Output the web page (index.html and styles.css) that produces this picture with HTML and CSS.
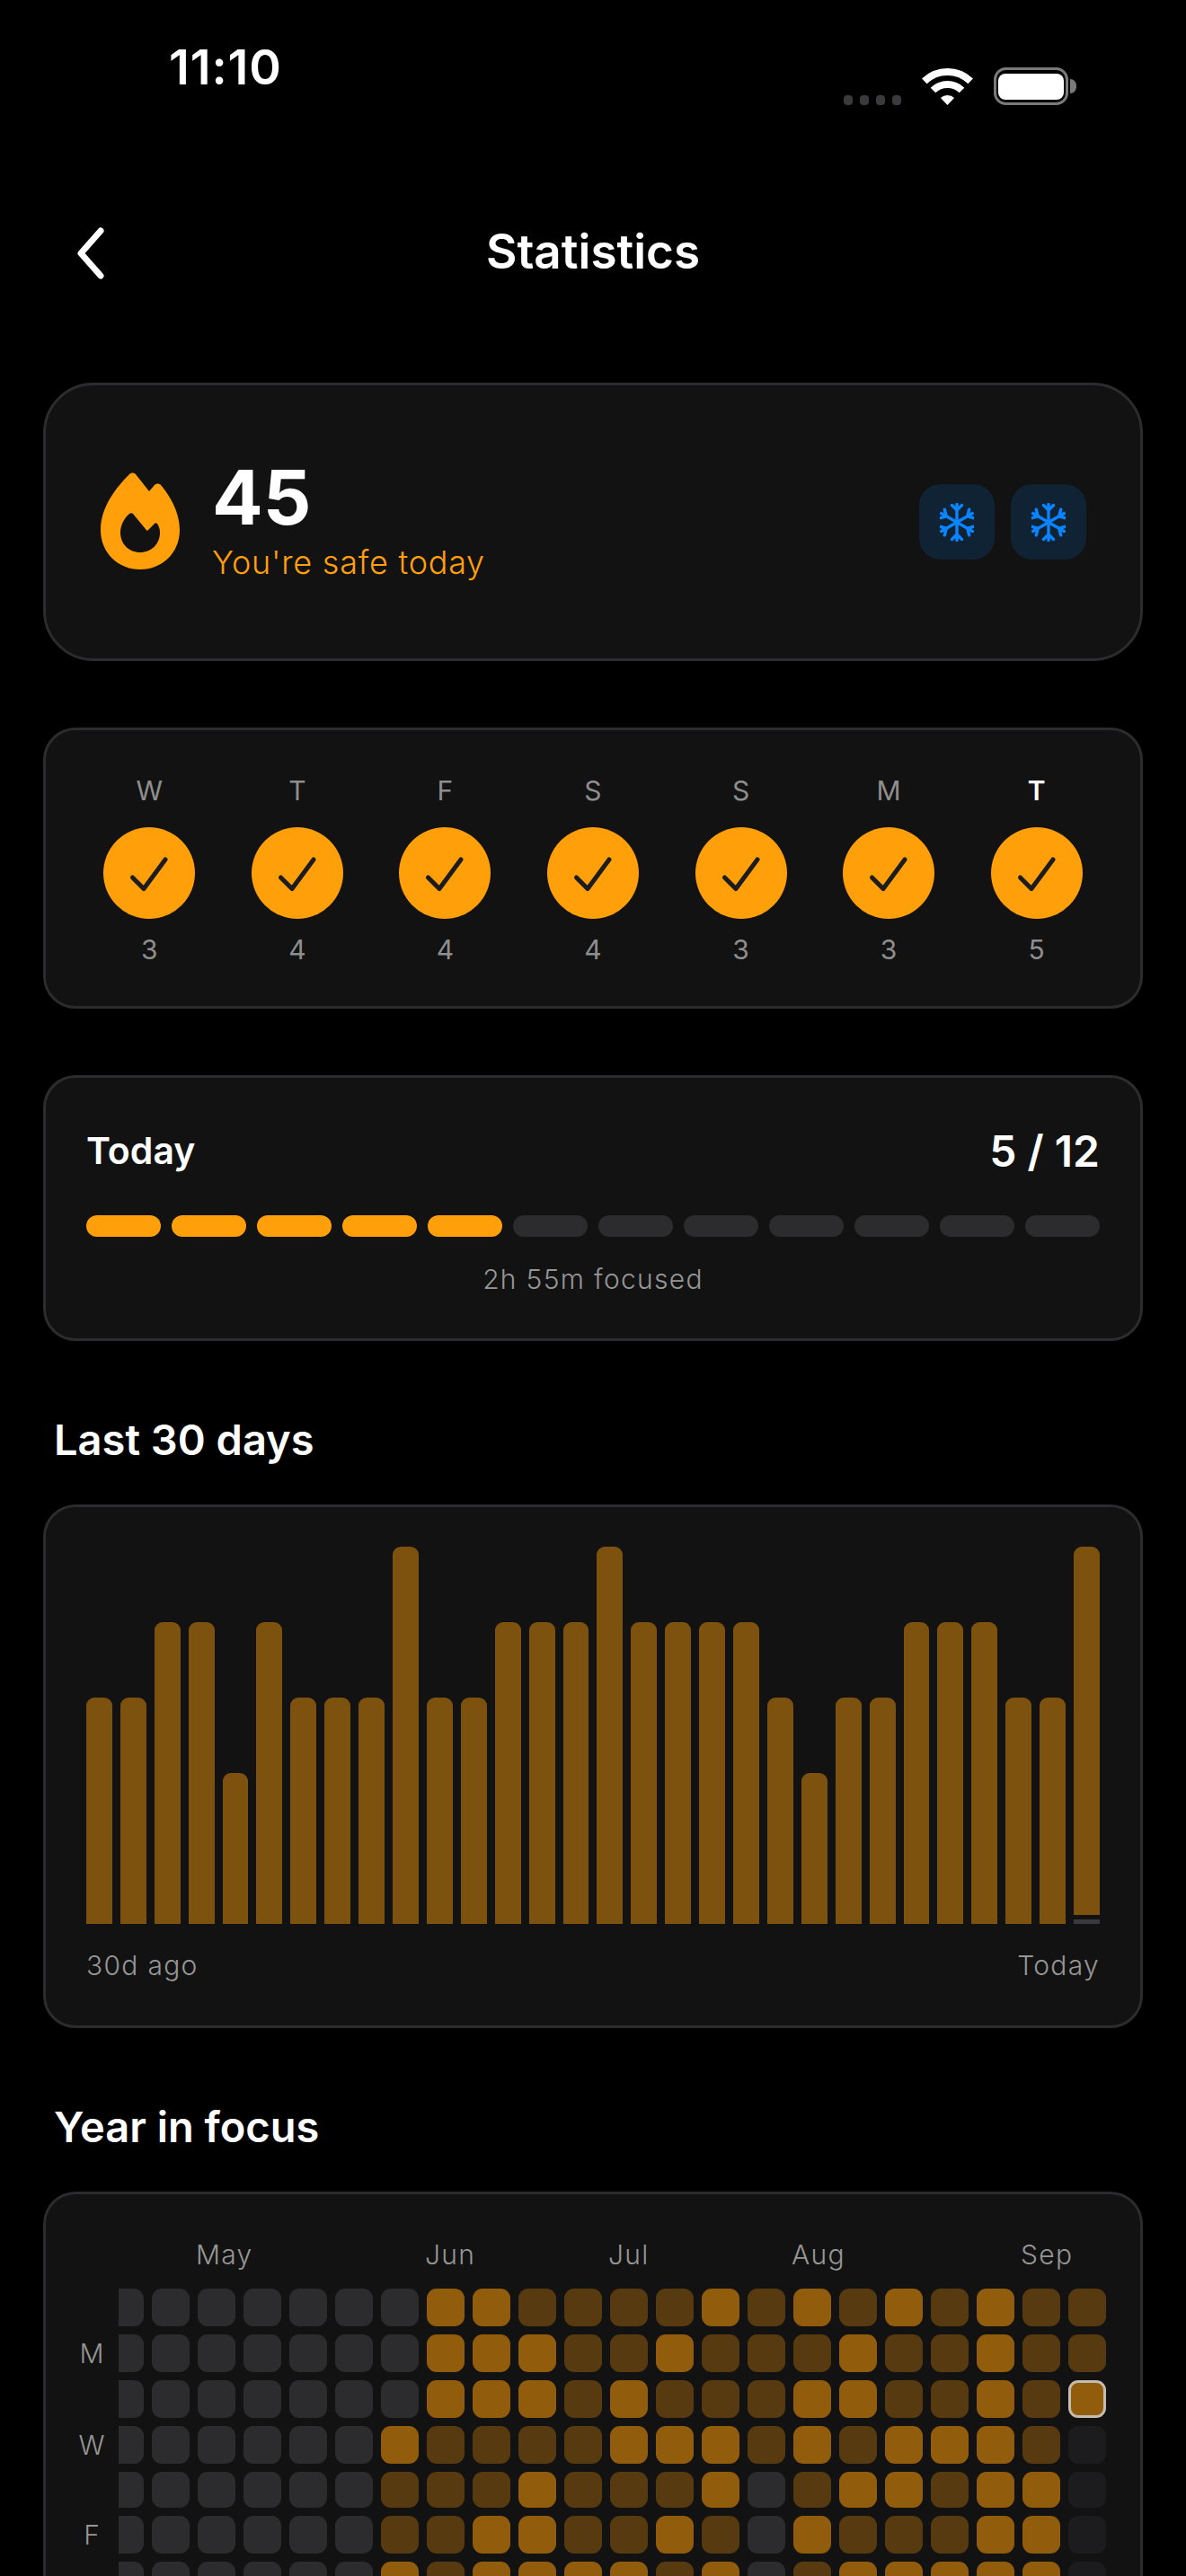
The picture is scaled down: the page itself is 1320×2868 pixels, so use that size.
FILE: index.html
```html
<!DOCTYPE html>
<html lang="en">
<head>
<meta charset="utf-8">
<title>Statistics</title>
<link rel="stylesheet" href="styles.css">
</head>
<body>
<svg class="defs" width="0" height="0" aria-hidden="true">
  <defs>
    <g id="flake-arm"><path d="M19 21.5V1.5M13.5 2.5 19 8l5.5-5.5M19 21.5V41.5M13.5 40.5 19 35l5.5 5.5"/></g>
    <g id="flake"><use href="#flake-arm"/><use href="#flake-arm" transform="rotate(60 19 21.5)"/><use href="#flake-arm" transform="rotate(120 19 21.5)"/></g>
    <g id="tick"><path d="M32.5 56 45 68.5 69 36"/></g>
  </defs>
</svg>
<div class="page">
  <div class="status">
    <div class="time">11:10</div>
    <div class="status-icons">
      <div class="signal"><i></i><i></i><i></i><i></i></div>
      <svg class="wifi" width="57" height="41" viewBox="0 0 57 41"><path class="wifi-arc" d="M2.8 14.4A37 37 0 0 1 54.2 14.4"/><path class="wifi-arc" d="M12.5 24.5A23 23 0 0 1 44.5 24.5"/><path class="wifi-dot" d="M28.5 41 20.9 33.1A11 11 0 0 1 36.1 33.1Z"/></svg>
      <svg class="battery" width="92" height="42" viewBox="0 0 92 42"><rect class="bat-shell" x="1.5" y="1.5" width="80" height="39" rx="12"/><rect class="bat-fill" x="5" y="7" width="73" height="29" rx="8"/><path class="bat-cap" d="M85 13c4 0 7 3 7 8s-3 8-7 8z"/></svg>
    </div>
  </div>

  <header class="nav">
    <svg class="back" width="32" height="60" viewBox="0 0 32 60"><path d="M27 5 5 30l22 25"/></svg>
    <h1 class="title">Statistics</h1>
  </header>

  <section class="card streak">
    <svg class="flame" width="88" height="108" viewBox="0 0 88 108"><path fill-rule="evenodd" d="M32 2C18 16 0 38 0 64c0 26 20 44 44 44s44-18 44-44c0-20-11-38-21-50-2-2-5-2-7 0l-6 7L39 2c-2-2-5-2-7 0ZM32 46c-6 5-10 13-10 21 0 13 10 22 22 22s22-9 22-22c0-4-1-7-3-10-1-1-2-1-3 0l-7 7c-1 1-2 1-3-1L36 46c-1-1-3-1-4 0Z"/></svg>
    <div class="streak-text">
      <div class="streak-num">45</div>
      <div class="streak-sub">You're safe today</div>
    </div>
    <div class="freezes">
      <div class="freeze"><svg class="flake" width="38" height="43" viewBox="0 0 38 43"><use href="#flake"/></svg></div>
      <div class="freeze"><svg class="flake" width="38" height="43" viewBox="0 0 38 43"><use href="#flake"/></svg></div>
    </div>
  </section>

  <section class="card week">
    <div class="day"><div class="day-l">W</div><svg class="tick" width="102" height="102" viewBox="0 0 102 102"><circle cx="51" cy="51" r="51"/><use href="#tick"/></svg><div class="day-n">3</div></div>
    <div class="day"><div class="day-l">T</div><svg class="tick" width="102" height="102" viewBox="0 0 102 102"><circle cx="51" cy="51" r="51"/><use href="#tick"/></svg><div class="day-n">4</div></div>
    <div class="day"><div class="day-l">F</div><svg class="tick" width="102" height="102" viewBox="0 0 102 102"><circle cx="51" cy="51" r="51"/><use href="#tick"/></svg><div class="day-n">4</div></div>
    <div class="day"><div class="day-l">S</div><svg class="tick" width="102" height="102" viewBox="0 0 102 102"><circle cx="51" cy="51" r="51"/><use href="#tick"/></svg><div class="day-n">4</div></div>
    <div class="day"><div class="day-l">S</div><svg class="tick" width="102" height="102" viewBox="0 0 102 102"><circle cx="51" cy="51" r="51"/><use href="#tick"/></svg><div class="day-n">3</div></div>
    <div class="day"><div class="day-l">M</div><svg class="tick" width="102" height="102" viewBox="0 0 102 102"><circle cx="51" cy="51" r="51"/><use href="#tick"/></svg><div class="day-n">3</div></div>
    <div class="day"><div class="day-l now">T</div><svg class="tick" width="102" height="102" viewBox="0 0 102 102"><circle cx="51" cy="51" r="51"/><use href="#tick"/></svg><div class="day-n">5</div></div>
  </section>

  <section class="card today">
    <div class="today-head"><span class="today-label">Today</span><span class="today-count">5 / 12</span></div>
    <div class="segs">
      <i class="on"></i><i class="on"></i><i class="on"></i><i class="on"></i><i class="on"></i><i></i><i></i><i></i><i></i><i></i><i></i><i></i>
    </div>
    <div class="focused">2h 55m focused</div>
  </section>

  <h2 class="heading">Last 30 days</h2>
  <section class="card month">
    <div class="bars">
      <i class="v3"></i><i class="v3"></i><i class="v4"></i><i class="v4"></i><i class="v2"></i><i class="v4"></i><i class="v3"></i><i class="v3"></i><i class="v3"></i><i class="v5"></i>
      <i class="v3"></i><i class="v3"></i><i class="v4"></i><i class="v4"></i><i class="v4"></i><i class="v5"></i><i class="v4"></i><i class="v4"></i><i class="v4"></i><i class="v4"></i>
      <i class="v3"></i><i class="v2"></i><i class="v3"></i><i class="v3"></i><i class="v4"></i><i class="v4"></i><i class="v4"></i><i class="v3"></i><i class="v3"></i>
      <div class="bar-last"><i class="v5 cut"></i><b></b></div>
    </div>
    <div class="month-foot"><span>30d ago</span><span>Today</span></div>
  </section>

  <h2 class="heading">Year in focus</h2>
  <section class="card year">
    <div class="heat-days">
      <span class="wd wd-m">M</span>
      <span class="wd wd-w">W</span>
      <span class="wd wd-f">F</span>
    </div>
    <div class="heat-main">
      <div class="heat-months">
        <span class="mo mo-may">May</span><span class="mo mo-jun">Jun</span><span class="mo mo-jul">Jul</span><span class="mo mo-aug">Aug</span><span class="mo mo-sep">Sep</span>
      </div>
      <div class="heat">
        <i></i><i></i><i></i><i></i><i></i><i></i><i></i><i class="h"></i><i class="h"></i><i class="l"></i><i class="l"></i><i class="l"></i><i class="l"></i><i class="h"></i><i class="l"></i><i class="h"></i><i class="l"></i><i class="h"></i><i class="l"></i><i class="h"></i><i class="l"></i><i class="l"></i>
        <i></i><i></i><i></i><i></i><i></i><i></i><i></i><i class="h"></i><i class="h"></i><i class="h"></i><i class="l"></i><i class="l"></i><i class="h"></i><i class="l"></i><i class="l"></i><i class="l"></i><i class="h"></i><i class="l"></i><i class="l"></i><i class="h"></i><i class="l"></i><i class="l"></i>
        <i></i><i></i><i></i><i></i><i></i><i></i><i></i><i class="h"></i><i class="h"></i><i class="h"></i><i class="l"></i><i class="h"></i><i class="l"></i><i class="l"></i><i class="l"></i><i class="h"></i><i class="h"></i><i class="l"></i><i class="l"></i><i class="h"></i><i class="l"></i><i class="h cur"></i>
        <i></i><i></i><i></i><i></i><i></i><i></i><i class="h"></i><i class="l"></i><i class="l"></i><i class="l"></i><i class="l"></i><i class="h"></i><i class="h"></i><i class="h"></i><i class="l"></i><i class="h"></i><i class="l"></i><i class="h"></i><i class="h"></i><i class="h"></i><i class="l"></i><i class="f"></i>
        <i></i><i></i><i></i><i></i><i></i><i></i><i class="l"></i><i class="l"></i><i class="l"></i><i class="h"></i><i class="l"></i><i class="l"></i><i class="l"></i><i class="h"></i><i></i><i class="l"></i><i class="h"></i><i class="h"></i><i class="l"></i><i class="h"></i><i class="h"></i><i class="f"></i>
        <i></i><i></i><i></i><i></i><i></i><i></i><i class="l"></i><i class="l"></i><i class="h"></i><i class="h"></i><i class="l"></i><i class="l"></i><i class="h"></i><i class="l"></i><i></i><i class="h"></i><i class="l"></i><i class="l"></i><i class="l"></i><i class="h"></i><i class="h"></i><i class="f"></i>
        <i></i><i></i><i></i><i></i><i></i><i></i><i class="h"></i><i class="l"></i><i class="h"></i><i class="h"></i><i class="h"></i><i class="h"></i><i class="l"></i><i class="h"></i><i></i><i class="l"></i><i class="h"></i><i class="h"></i><i class="h"></i><i class="h"></i><i class="h"></i><i class="f"></i>
      </div>
    </div>
  </section>
</div>
</body>
</html>
```

FILE: styles.css
```css
* { box-sizing: border-box; }
html, body { margin: 0; height: 2868px; overflow: hidden; background: #000; }
body { font-family: Inter, "Liberation Sans", sans-serif; color: #fff; }
i { display: block; font-style: normal; }
.defs { position: absolute; }
.page { display: flex; flex-direction: column; padding: 0 48px; }

/* status bar */
.status { height: 224px; margin: 0 -48px; padding: 49px 122px 0 188px; display: flex; justify-content: space-between; align-items: flex-start; }
.time { font-size: 54px; line-height: 52px; font-weight: 600; letter-spacing: 0.9px; }
.status-icons { margin-top: 26px; height: 42px; display: flex; align-items: flex-end; }
.signal { display: flex; gap: 8px; margin-right: 23px; }
.signal i { width: 10px; height: 11px; border-radius: 4px; background: #3a3a3c; }
.wifi { margin-right: 23px; }
.wifi-arc { fill: none; stroke: #fff; stroke-width: 8; }
.wifi-dot { fill: #fff; }
.bat-shell { fill: none; stroke: #7a7a7a; stroke-width: 3; }
.bat-fill { fill: #fff; }
.bat-cap { fill: #7a7a7a; }

/* header */
.nav { height: 112px; margin: 0 -48px; position: relative; display: flex; align-items: center; justify-content: center; }
.back { position: absolute; left: 85px; top: 28px; fill: none; stroke: #fff; stroke-width: 7; stroke-linecap: round; stroke-linejoin: round; }
.title { margin: 0; font-size: 53px; line-height: 64px; font-weight: 600; }

/* cards */
.card { background: #121212; border: 3px solid #2c2c2e; border-radius: 36px; }
.streak { margin-top: 90px; height: 310px; border-radius: 56px; display: flex; align-items: center; padding: 0 60px 0 61px; }
.flame { fill: #ff9f0a; flex: none; margin-top: -3px; }
.streak-text { margin-left: 36px; flex: 1; margin-top: -2px; }
.streak-num { font-size: 84px; line-height: 84px; font-weight: 700; }
.streak-sub { margin-top: 8px; font-size: 36px; line-height: 44px; font-weight: 300; letter-spacing: 0.75px; color: #ff9f0a; }
.freezes { display: flex; gap: 18px; }
.freeze { width: 84px; height: 84px; border-radius: 24px; background: rgba(10, 132, 255, .15); display: flex; align-items: center; justify-content: center; }
.flake { fill: none; stroke: #0a84ff; stroke-width: 3.4; stroke-linecap: round; stroke-linejoin: round; }

.week { margin-top: 74px; padding: 49px 33px 45px; display: grid; grid-template-columns: repeat(7, 1fr); }
.day { display: flex; flex-direction: column; align-items: center; }
.day-l { font-size: 30px; line-height: 36px; color: #8e8e8e; margin-bottom: 23px; }
.day-l.now { color: #fff; font-weight: 600; }
.day-n { font-size: 30px; line-height: 36px; color: #8e8e8e; margin-top: 16px; }
.tick circle { fill: #ff9f0a; }
.tick use { fill: none; stroke: #1c1c1e; stroke-width: 5; stroke-linecap: round; stroke-linejoin: round; }

.today { margin-top: 74px; padding: 56px 45px 46px; }
.today-head { display: flex; justify-content: space-between; align-items: center; height: 50px; }
.today-label { font-size: 41px; font-weight: 600; }
.today-count { font-size: 48px; font-weight: 600; }
.segs { margin-top: 47px; display: grid; grid-template-columns: repeat(12, 1fr); gap: 12px; }
.segs i { height: 24px; border-radius: 12px; background: #2c2c2e; }
.segs i.on { background: #ff9f0a; }
.focused { margin-top: 27px; text-align: center; font-size: 30px; line-height: 40px; font-weight: 300; letter-spacing: 1.3px; color: #969696; }

.heading { margin: 80px 0 42px 12px; font-size: 47px; line-height: 60px; font-weight: 600; }

.month { padding: 44px 45px 0; height: 583px; }
.bars { height: 420px; display: grid; grid-template-columns: repeat(30, 1fr); column-gap: 9px; align-items: end; }
.bars i { border-radius: 9px 9px 0 0; background: #7d520f; }
.v2 { height: 168px; }
.v3 { height: 252px; }
.v4 { height: 336px; }
.v5 { height: 420px; }
.bars i.cut { height: 410px; border-radius: 9px 9px 0 0; }
.bar-last { display: flex; flex-direction: column; gap: 5px; }
.bar-last b { display: block; height: 5px; background: #3a3a3c; }
.month-foot { margin-top: 28px; display: flex; justify-content: space-between; font-size: 30px; line-height: 36px; font-weight: 300; letter-spacing: 1.3px; color: #969696; }

.year { padding: 45px 33px 0; display: flex; height: 429px; border-bottom: 0; border-radius: 36px 36px 0 0; overflow: hidden; }
.heat-days { flex: none; width: 36px; margin-right: 12px; display: grid; grid-template-rows: 42px 42px 42px 42px 40px 42px 42px; row-gap: 9px; padding-top: 60px; justify-items: center; align-items: center; }
.wd { font-size: 30px; line-height: 36px; font-weight: 300; color: #969696; }
.wd-m { grid-row: 2; }
.wd-w { grid-row: 4; }
.wd-f { grid-row: 6; }
.heat-main { flex: 1; min-width: 0; overflow: hidden; padding-right: 5px; }
.heat-months, .heat { display: grid; grid-template-columns: repeat(22, 42px); column-gap: 9px; justify-content: end; }
.heat-months { height: 60px; }
.mo { font-size: 30px; line-height: 44px; font-weight: 300; letter-spacing: 1.3px; color: #969696; margin-left: -2px; white-space: nowrap; }
.mo-may { grid-column: 3 / span 3; grid-row: 1; }
.mo-jun { grid-column: 8 / span 3; grid-row: 1; }
.mo-jul { grid-column: 12 / span 3; grid-row: 1; }
.mo-aug { grid-column: 16 / span 3; grid-row: 1; }
.mo-sep { grid-column: 21 / span 2; grid-row: 1; }
.heat { grid-template-rows: 42px 42px 42px 42px 40px 42px 42px; row-gap: 9px; }
.heat i { border-radius: 11px; background: #2c2c2e; }
.heat i.l { background: #573a10; }
.heat i.h { background: #915d0c; }
.heat i.f { background: #1c1c1e; }
.heat i.cur { border: 3px solid #c4bcae; }
```
